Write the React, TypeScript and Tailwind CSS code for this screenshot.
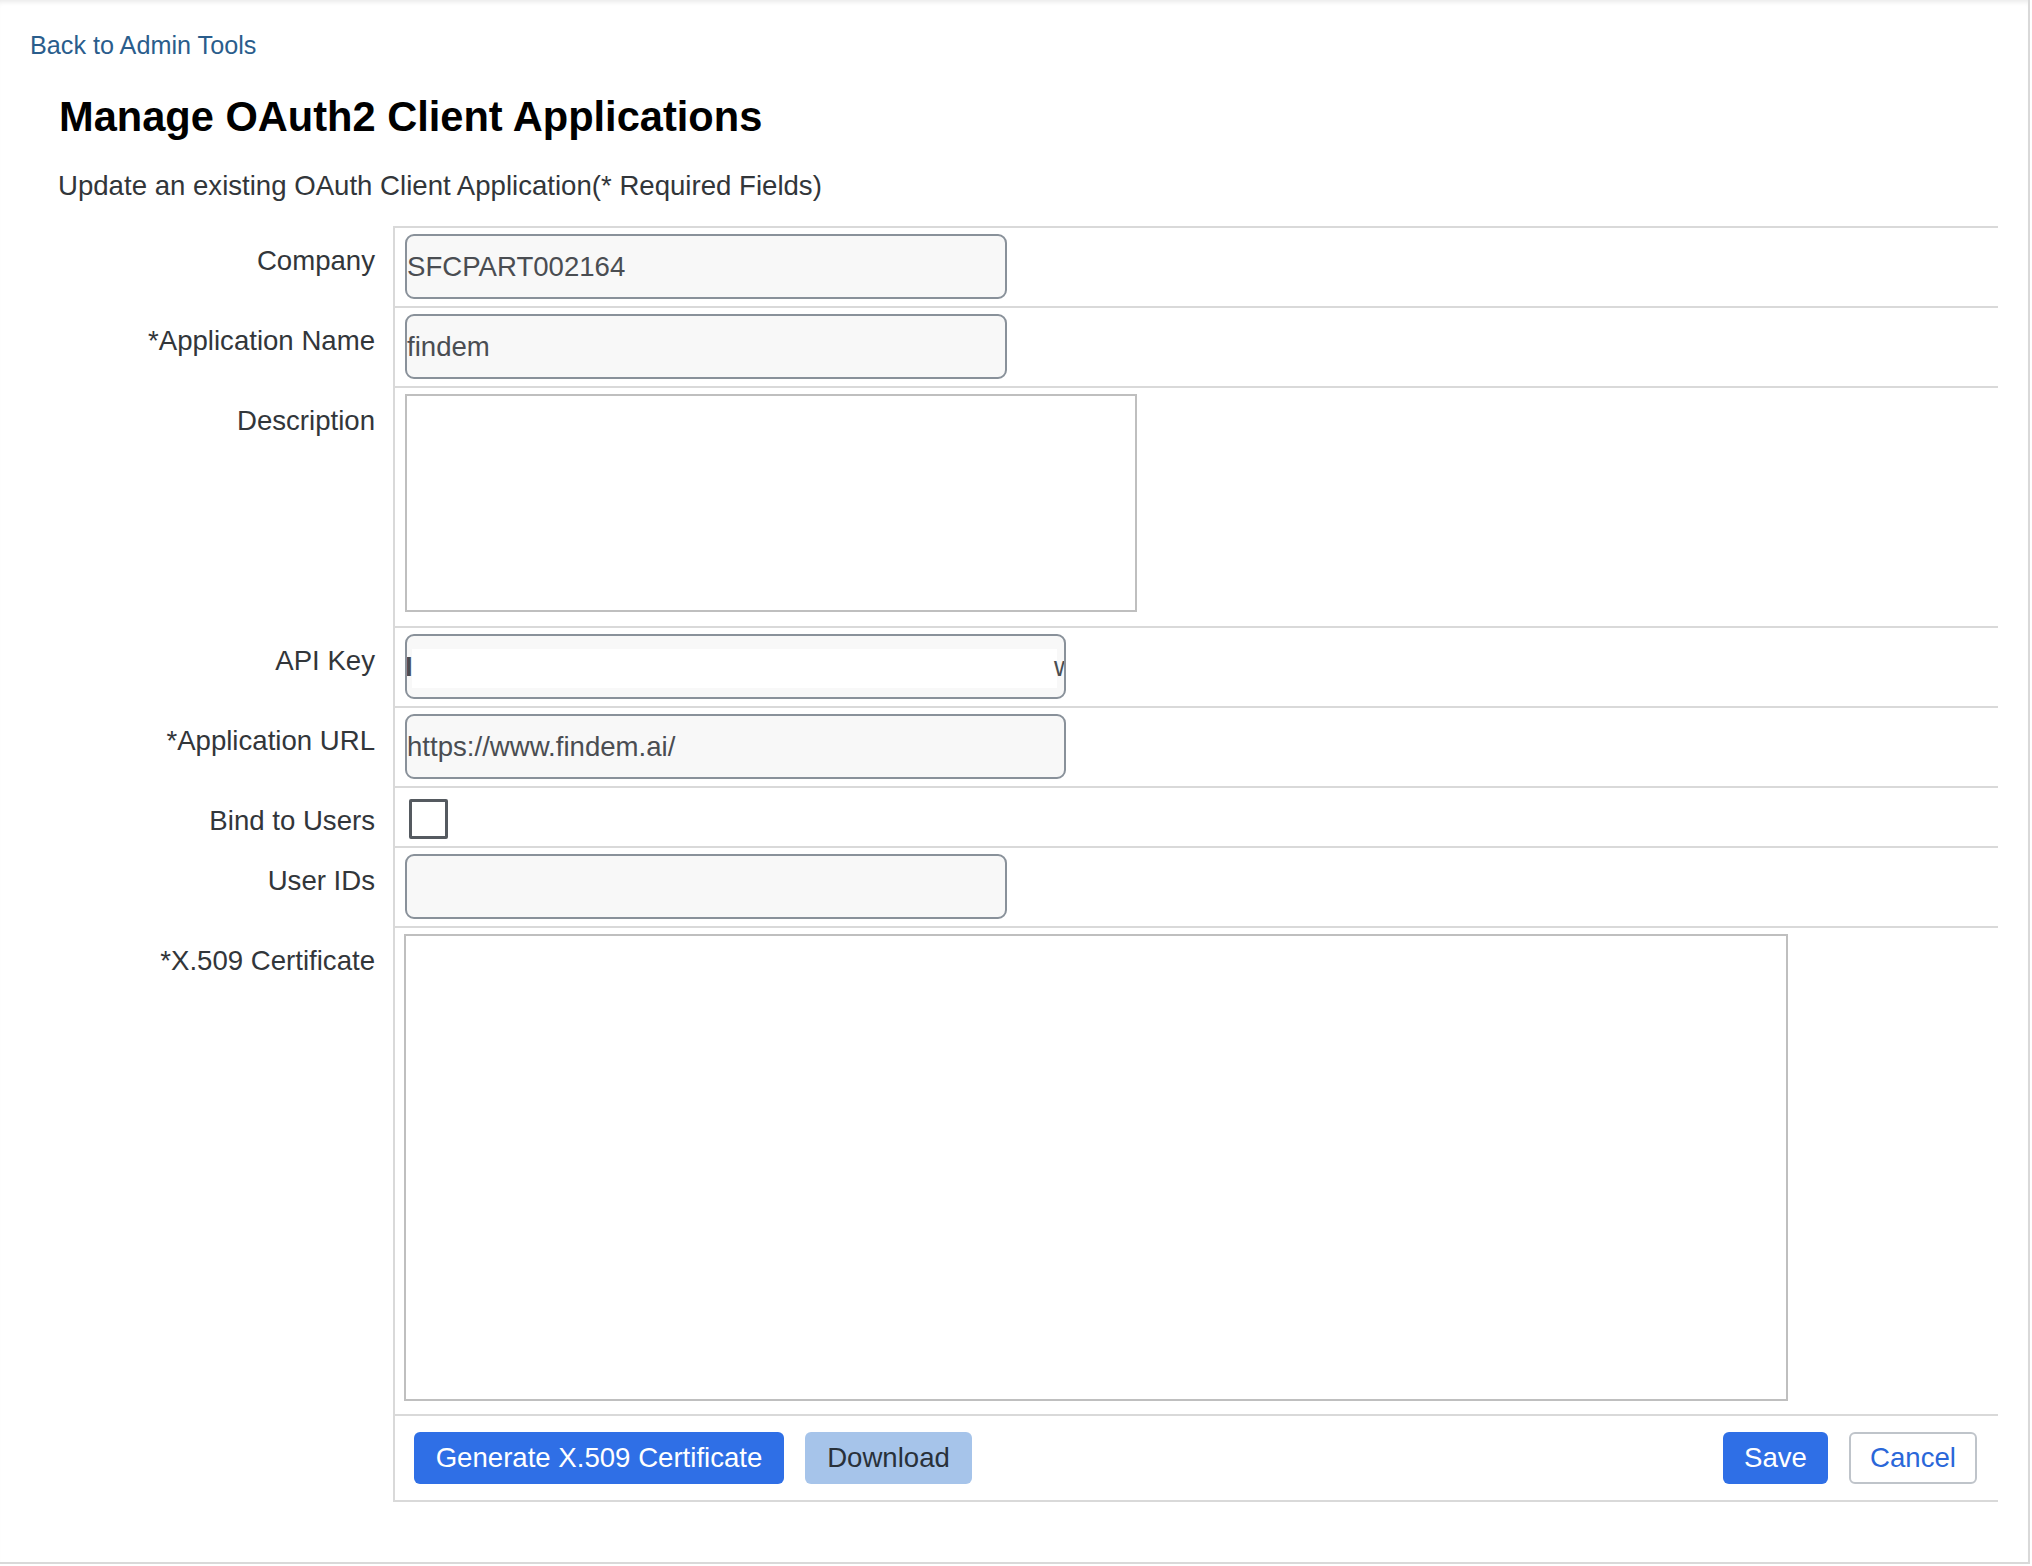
import React from "react";

const field = "h-[65px] rounded-[9px] border-2 border-[#89919a] bg-[#f8f8f8] pl-0 text-[27.6px] text-[#4a4d52] outline-none";

function Label({ text, pt = "pt-[18px]" }: { text: string; pt?: string }) {
  return (
    <div className={`w-[393px] shrink-0 pr-[18px] text-right text-[27.6px] leading-[33px] text-[#32363a] ${pt}`}>
      {text}
    </div>
  );
}

function Row({ label, children, cell }: { label: string; children: React.ReactNode; cell: string }) {
  return (
    <div className="flex items-start">
      <Label text={label} />
      <div className={`flex-1 border-l-2 border-t-2 border-[#d9d9d9] pl-[10px] ${cell}`}>{children}</div>
    </div>
  );
}

export default function App() {
  return (
    <div className="h-[1566px] w-[2032px] bg-white font-['Liberation_Sans',Arial,sans-serif]">
      <div className="h-[1564px] w-[2030px] border-b-2 border-r-2 border-[#d9d9d9] shadow-[inset_0_5px_5px_-3px_rgba(0,0,0,0.09)]">
        {/* header */}
        <div className="pl-[30px] pt-[30px]">
          <a className="cursor-pointer text-[25.2px] leading-[30px] text-[#2a5d8c]">Back to Admin Tools</a>
        </div>
        <h1 className="mt-[31px] pl-[59px] text-[41.6px] font-bold leading-[50px] text-black">
          Manage OAuth2 Client Applications
        </h1>
        <p className="mt-[27px] pl-[58px] text-[27.6px] leading-[33px] text-[#32363a]">
          Update an existing OAuth Client Application(* Required Fields)
        </p>

        {/* form table */}
        <div className="mt-[24px] w-[1998px]">
          <Row label="Company" cell="pt-[6px] pb-[7px]">
            <input readOnly defaultValue="SFCPART002164" className={`${field} w-[602px]`} />
          </Row>
          <Row label="*Application Name" cell="pt-[6px] pb-[7px]">
            <input readOnly defaultValue="findem" className={`${field} w-[602px]`} />
          </Row>
          <Row label="Description" cell="pt-[6px] pb-[14px]">
            <textarea className="block h-[218px] w-[732px] resize-none border-2 border-[#bfbfbf] bg-white outline-none" />
          </Row>
          <Row label="API Key" cell="pt-[6px] pb-[7px]">
            <div className="relative h-[65px] w-[661px] overflow-hidden rounded-[9px] border-2 border-[#89919a] bg-[#f8f8f8] pb-[9px] pl-[5px] pr-[7px] pt-[13px]">
              <div className="h-full bg-white" />
              {/* scrolled key value, only the edge glyphs peek out */}
              <div className="absolute inset-y-0 left-0 right-0 flex items-center text-[27.6px] text-[#4a4d52]">
                <span className="-ml-[2px] font-bold">I</span>
                <span className="ml-auto -mr-[10px]">w</span>
              </div>
            </div>
          </Row>
          <Row label="*Application URL" cell="pt-[6px] pb-[7px]">
            <input readOnly defaultValue="https://www.findem.ai/" className={`${field} w-[661px]`} />
          </Row>
          <Row label="Bind to Users" cell="pt-[11px] pb-[7px]">
            <div className="ml-[4px] h-[40px] w-[39px] rounded-[2px] border-[3px] border-[#555a60] bg-white" />
          </Row>
          <Row label="User IDs" cell="pt-[6px] pb-[7px]">
            <input readOnly defaultValue="" className={`${field} w-[602px]`} />
          </Row>
          <Row label="*X.509 Certificate" cell="pt-[6px] pb-[13px]">
            <textarea className="-ml-px block h-[467px] w-[1384px] resize-none border-2 border-[#bfbfbf] bg-white outline-none" />
          </Row>

          {/* actions */}
          <div className="flex">
            <div className="w-[393px] shrink-0" />
            <div className="flex flex-1 items-center border-b-2 border-l-2 border-t-2 border-[#d9d9d9] py-[16px] pl-[19px] pr-[21px] text-[27.6px]">
              <button className="h-[52px] w-[370px] rounded-[6px] bg-[#2f6fe6] text-white">Generate X.509 Certificate</button>
              <button className="ml-[21px] h-[52px] w-[167px] rounded-[6px] bg-[#a6c4ea] text-[#29313a]">Download</button>
              <button className="ml-auto h-[52px] w-[105px] rounded-[6px] bg-[#2f6fe6] text-white">Save</button>
              <button className="ml-[21px] h-[52px] w-[128px] rounded-[6px] border-2 border-[#bfc4ca] bg-white text-[#2a67d9]">Cancel</button>
            </div>
          </div>
        </div>
      </div>
    </div>
  );
}
